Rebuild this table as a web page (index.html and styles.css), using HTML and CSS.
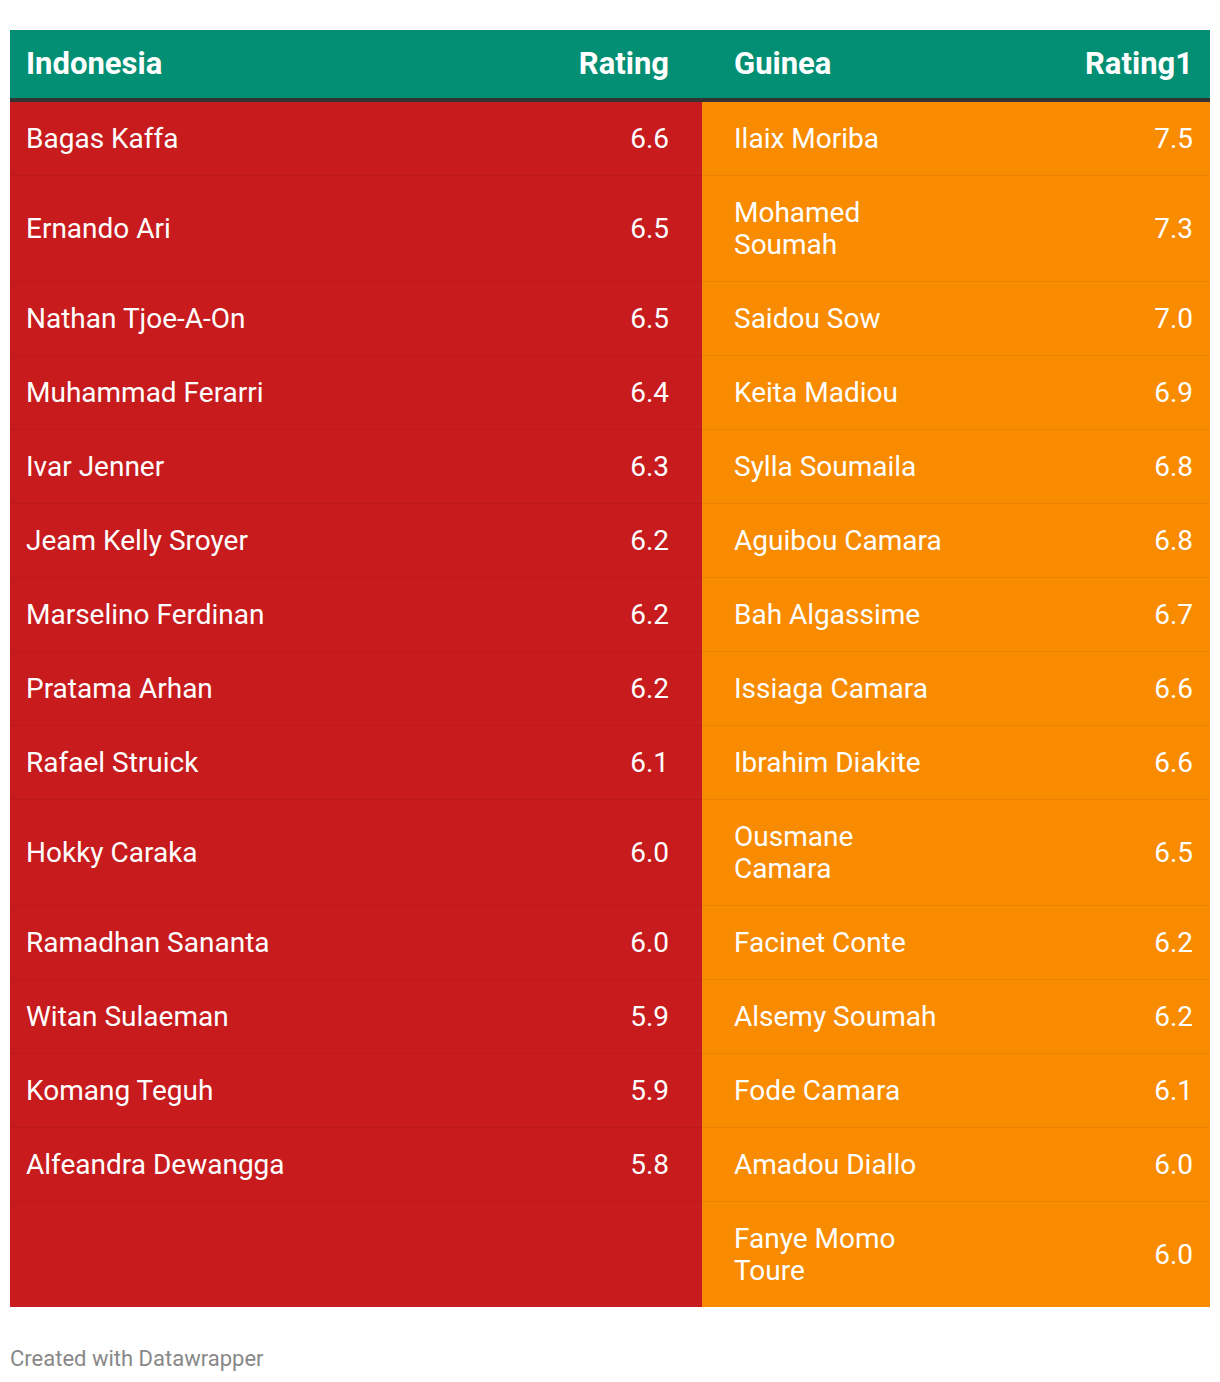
FILE: index.html
```html
<!DOCTYPE html>
<html>
<head>
<meta charset="utf-8">
<link rel="stylesheet" href="styles.css">
</head>
<body>
<div class="chart">
  <table class="dw-table">
    <colgroup>
      <col class="c-name-l">
      <col class="c-rate-l">
      <col class="c-name-r">
      <col class="c-rate-r">
    </colgroup>
    <thead>
      <tr>
        <th class="name-l">Indonesia</th>
        <th class="rate-l">Rating</th>
        <th class="name-r">Guinea</th>
        <th class="rate-r">Rating1</th>
      </tr>
    </thead>
    <tbody>
      <tr><td class="name-l">Bagas Kaffa</td><td class="rate-l">6.6</td><td class="name-r">Ilaix Moriba</td><td class="rate-r">7.5</td></tr>
      <tr><td class="name-l">Ernando Ari</td><td class="rate-l">6.5</td><td class="name-r">Mohamed Soumah</td><td class="rate-r">7.3</td></tr>
      <tr><td class="name-l">Nathan Tjoe-A-On</td><td class="rate-l">6.5</td><td class="name-r">Saidou Sow</td><td class="rate-r">7.0</td></tr>
      <tr><td class="name-l">Muhammad Ferarri</td><td class="rate-l">6.4</td><td class="name-r">Keita Madiou</td><td class="rate-r">6.9</td></tr>
      <tr><td class="name-l">Ivar Jenner</td><td class="rate-l">6.3</td><td class="name-r">Sylla Soumaila</td><td class="rate-r">6.8</td></tr>
      <tr><td class="name-l">Jeam Kelly Sroyer</td><td class="rate-l">6.2</td><td class="name-r">Aguibou Camara</td><td class="rate-r">6.8</td></tr>
      <tr><td class="name-l">Marselino Ferdinan</td><td class="rate-l">6.2</td><td class="name-r">Bah Algassime</td><td class="rate-r">6.7</td></tr>
      <tr><td class="name-l">Pratama Arhan</td><td class="rate-l">6.2</td><td class="name-r">Issiaga Camara</td><td class="rate-r">6.6</td></tr>
      <tr><td class="name-l">Rafael Struick</td><td class="rate-l">6.1</td><td class="name-r">Ibrahim Diakite</td><td class="rate-r">6.6</td></tr>
      <tr><td class="name-l">Hokky Caraka</td><td class="rate-l">6.0</td><td class="name-r">Ousmane Camara</td><td class="rate-r">6.5</td></tr>
      <tr><td class="name-l">Ramadhan Sananta</td><td class="rate-l">6.0</td><td class="name-r">Facinet Conte</td><td class="rate-r">6.2</td></tr>
      <tr><td class="name-l">Witan Sulaeman</td><td class="rate-l">5.9</td><td class="name-r">Alsemy Soumah</td><td class="rate-r">6.2</td></tr>
      <tr><td class="name-l">Komang Teguh</td><td class="rate-l">5.9</td><td class="name-r">Fode Camara</td><td class="rate-r">6.1</td></tr>
      <tr><td class="name-l">Alfeandra Dewangga</td><td class="rate-l">5.8</td><td class="name-r">Amadou Diallo</td><td class="rate-r">6.0</td></tr>
      <tr><td class="name-l"></td><td class="rate-l"></td><td class="name-r">Fanye Momo Toure</td><td class="rate-r">6.0</td></tr>
    </tbody>
  </table>
  <div class="footer">Created with Datawrapper</div>
</div>
</body>
</html>
```

FILE: styles.css
```css
html, body {
  margin: 0;
  padding: 0;
  background: #ffffff;
}

.chart {
  padding: 30px 10px 0 10px;
  font-family: Roboto, "Liberation Sans", sans-serif;
}

.dw-table {
  width: 1200px;
  border-collapse: collapse;
  table-layout: fixed;
  color: #ffffff;
  font-size: 28px;
  line-height: 32px;
}

.c-name-l { width: 500px; }
.c-rate-l { width: 192px; }
.c-name-r { width: 248px; }
.c-rate-r { width: 260px; }

.dw-table th {
  background: #038f73;
  font-weight: 700;
  font-size: 31px;
  padding: 18px 0 18px 0;
  border-bottom: 4px solid #333333;
  text-align: left;
}

.dw-table td {
  padding: 21px 0 20px 0;
  border-bottom: 1px solid rgba(0, 0, 0, 0.06);
  vertical-align: middle;
  font-weight: 400;
}

.dw-table tbody tr:last-child td {
  border-bottom: none;
}

.dw-table td.name-l,
.dw-table td.rate-l {
  background: #c71b1d;
}

.dw-table td.name-r,
.dw-table td.rate-r {
  background: #f98b00;
}

.name-l {
  padding-left: 16px !important;
  text-align: left;
}

.rate-l {
  padding-right: 33px !important;
  text-align: right !important;
}

.name-r {
  padding-left: 32px !important;
  text-align: left;
}

.rate-r {
  padding-right: 17px !important;
  text-align: right !important;
}

.footer {
  margin-top: 40px;
  font-size: 22px;
  line-height: 24px;
  color: #888888;
}
```
